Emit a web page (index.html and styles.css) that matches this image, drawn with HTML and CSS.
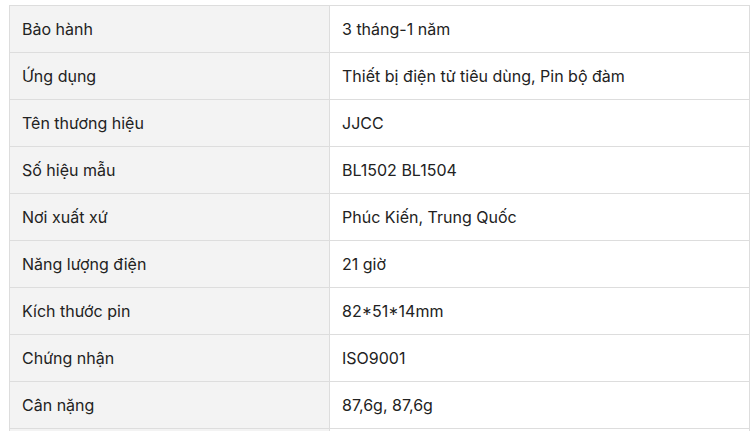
FILE: index.html
```html
<!DOCTYPE html>
<html lang="vi">
<head>
<meta charset="utf-8">
<title>Thông số</title>
<link rel="stylesheet" href="styles.css">
</head>
<body>
<table class="spec">
  <tbody>
    <tr><td class="key">Bảo hành</td><td class="val">3 tháng-1 năm</td></tr>
    <tr><td class="key">Ứng dụng</td><td class="val">Thiết bị điện tử tiêu dùng, Pin bộ đàm</td></tr>
    <tr><td class="key">Tên thương hiệu</td><td class="val">JJCC</td></tr>
    <tr><td class="key">Số hiệu mẫu</td><td class="val">BL1502 BL1504</td></tr>
    <tr><td class="key">Nơi xuất xứ</td><td class="val">Phúc Kiến, Trung Quốc</td></tr>
    <tr><td class="key">Năng lượng điện</td><td class="val">21 giờ</td></tr>
    <tr><td class="key">Kích thước pin</td><td class="val">82*51*14mm</td></tr>
    <tr><td class="key">Chứng nhận</td><td class="val">ISO9001</td></tr>
    <tr><td class="key">Cân nặng</td><td class="val">87,6g, 87,6g</td></tr>
    <tr><td class="key">&nbsp;</td><td class="val">&nbsp;</td></tr>
  </tbody>
</table>
</body>
</html>
```
FILE: styles.css
```css
html, body {
  margin: 0;
  background: #ffffff;
}
body {
  padding: 5px 0 0 9px;
  font-family: Inter, "Noto Sans", sans-serif;
  font-size: 16px;
  color: #222222;
}
.spec {
  border-collapse: collapse;
  width: 741px;
  table-layout: fixed;
}
.spec td {
  border: 1px solid #dddddd;
  height: 47px;
  padding: 0 12px;
  box-sizing: border-box;
  vertical-align: middle;
  line-height: 20px;
}
.spec .key {
  width: 320px;
  background: #f3f3f3;
}
.spec .val {
  background: #ffffff;
}
```
